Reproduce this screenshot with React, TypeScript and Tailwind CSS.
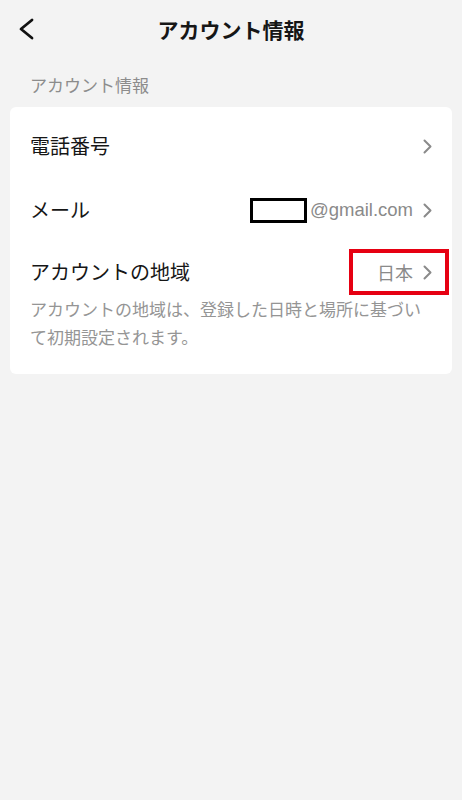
import React from "react";

const Chevron = () => (
  <svg width="9" height="15" viewBox="0 0 9 15" className="shrink-0">
    <polyline points="1.5,1.5 7.5,7.5 1.5,13.5" fill="none" stroke="#8a8a8a" strokeWidth="2" strokeLinecap="round" strokeLinejoin="round" />
  </svg>
);

export default function App() {
  return (
    <div
      className="w-[462px] h-[800px] bg-[#f3f3f3] text-[#161616]"
      style={{ fontFamily: '"Noto Sans CJK JP", "Noto Sans", "Liberation Sans", sans-serif' }}
    >
      <div className="h-[58px] grid grid-cols-[60px_1fr_60px] items-center">
        <div className="pl-[17px] flex items-center">
          <svg width="18" height="22" viewBox="0 0 18 22">
            <polyline points="15,2 4,11 15,20" fill="none" stroke="#111" strokeWidth="2.8" strokeLinecap="round" strokeLinejoin="round" />
          </svg>
        </div>
        <div className="text-center text-[21px] font-bold leading-[28px]">アカウント情報</div>
        <div />
      </div>
      <div className="pt-[15px] pb-[10px] pl-[30px] text-[17px] leading-[24px] text-[#8c8c8c]">アカウント情報</div>
      <div className="mx-[10px] bg-white rounded-[6px] pt-[7px] pb-[23px]">
        <div className="h-[64px] flex items-center justify-between px-[20px]">
          <span className="text-[20px] leading-[28px]">電話番号</span>
          <Chevron />
        </div>
        <div className="h-[64px] flex items-center justify-between px-[20px]">
          <span className="text-[20px] leading-[28px]">メール</span>
          <div className="flex items-center">
            <div className="w-[57px] h-[25px] border-[3px] border-black bg-white" />
            <span
              className="ml-[3px] mr-[10px] text-[18.5px] leading-[26px] text-[#8a8a8a]"
              style={{ fontFamily: '"Liberation Sans", Arial, sans-serif' }}
            >
              @gmail.com
            </span>
            <Chevron />
          </div>
        </div>
        <div className="mt-[7px] h-[46px] flex items-center justify-between pl-[20px]">
          <span className="text-[20px] leading-[28px]">アカウントの地域</span>
          <div className="h-[46px] w-[100px] border-[4px] border-[#e60012] flex items-center justify-end pr-[13px] mr-[3px]">
            <span className="text-[18px] leading-[24px] text-[#8a8a8a] mr-[10px]">日本</span>
            <Chevron />
          </div>
        </div>
        <div className="px-[20px] text-[17px] leading-[28px] text-[#959595]">
          アカウントの地域は、登録した日時と場所に基づいて初期設定されます。
        </div>
      </div>
    </div>
  );
}
